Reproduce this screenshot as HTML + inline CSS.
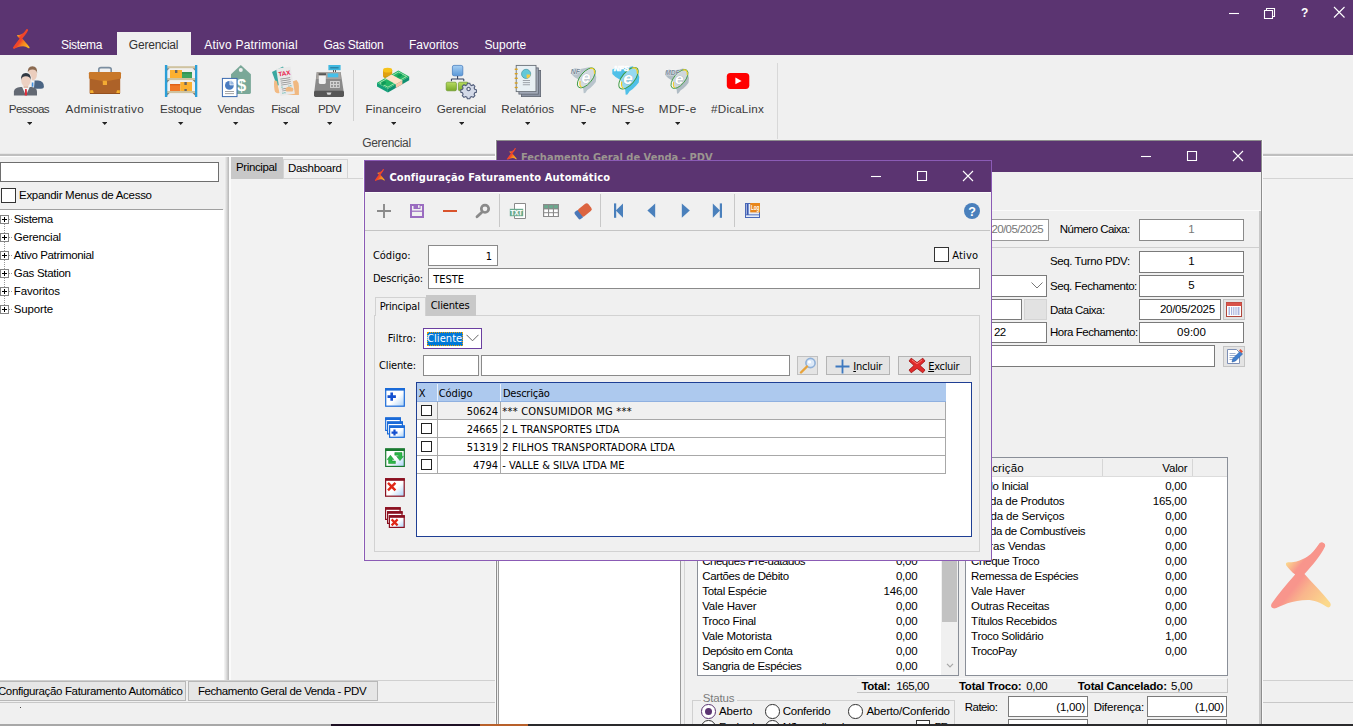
<!DOCTYPE html>
<html><head><meta charset="utf-8"><title>Linx</title>
<style>
html,body{margin:0;padding:0;}
body{width:1353px;height:726px;overflow:hidden;position:relative;background:#f0f0f0;font-family:'Liberation Sans',sans-serif;font-size:11px;}
div,span,svg{position:absolute;box-sizing:border-box;}
.clip{overflow:hidden;}
</style></head><body>
<div style="left:0px;top:0px;width:1353px;height:55px;background:#5b3471;"></div>
<div style="left:0px;top:55px;width:1353px;height:99px;background:#f0f0f0;"></div>
<div style="left:0px;top:153px;width:1353px;height:1px;background:#e6e6e6;"></div>
<div style="left:0px;top:154px;width:1353px;height:2px;background:#bfbfbf;"></div>
<div style="left:117px;top:32px;width:74px;height:24px;background:#f0f0f0;"></div>
<span style="left:61.0px;top:37px;font:normal 12px/16px 'Liberation Sans', sans-serif;color:#fff;letter-spacing:-0.327px;white-space:pre;">Sistema</span>
<span style="left:128.8px;top:37px;font:normal 12px/16px 'Liberation Sans', sans-serif;color:#333;letter-spacing:-0.207px;white-space:pre;">Gerencial</span>
<span style="left:204.2px;top:37px;font:normal 12px/16px 'Liberation Sans', sans-serif;color:#fff;letter-spacing:0.21px;white-space:pre;">Ativo Patrimonial</span>
<span style="left:323.4px;top:37px;font:normal 12px/16px 'Liberation Sans', sans-serif;color:#fff;letter-spacing:-0.25px;white-space:pre;">Gas Station</span>
<span style="left:408.9px;top:37px;font:normal 12px/16px 'Liberation Sans', sans-serif;color:#fff;letter-spacing:0.018px;white-space:pre;">Favoritos</span>
<span style="left:484.4px;top:37px;font:normal 12px/16px 'Liberation Sans', sans-serif;color:#fff;letter-spacing:-0.039px;white-space:pre;">Suporte</span>
<svg style="left:1225px;top:4px;" width="125" height="20" viewBox="0 0 125 20"><g stroke="#fff" stroke-width="1.1" fill="none">
<path d="M4 9.5H14"/>
<path d="M39.5 6.5h8v8h-8z" /><path d="M41.5 6.5v-2h8v8h-2"/>
<path d="M109 3l10.5 10.5M119.5 3L109 13.5"/></g>
<text x="76" y="13" font-family="Liberation Sans, sans-serif" font-weight="bold" font-size="12" fill="#fff">?</text></svg>
<svg style="left:13.1px;top:28.8px;overflow:visible;" width="16.5" height="19.7" viewBox="0.5 0 59.5 66.5" preserveAspectRatio="none"><defs><linearGradient id="lg1" gradientUnits="userSpaceOnUse" x1="15" y1="22" x2="59" y2="57"><stop offset="0" stop-color="#fbb81f"/><stop offset="0.22" stop-color="#f0452a"/><stop offset="0.38" stop-color="#f0452a"/><stop offset="0.58" stop-color="#f6801f"/><stop offset="1" stop-color="#fbb81f"/></linearGradient></defs>
<path d="M49 1.2 C50.5 -0.5 55.5 1 54.6 4.2 C50 14 42 23 34 32 C42 41 52 51 59.5 60.5 C61.5 63.5 59 66.5 56.5 65 C50 60.5 43 58 37 58 C30 58 23 59.5 17 61.3 C12 63 8 65.5 5 66.3 C1.5 67 -0.5 64.5 1.2 61.5 C8 52 16 42 24.7 32.6 C21 29.5 18 26.5 15.8 23.4 C14.8 21.5 16 20.2 18 20.3 C21 20.5 24 20 26 19.5 C30 18.5 34 16.5 37 14.6 C41 12 45 7 49 1.2 Z" fill="url(#lg1)"/><path d="M51.5 3.5 L4.5 63" stroke="#f0452a" stroke-width="5.5" stroke-linecap="round" fill="none" opacity="0.85"/></svg>
<span style="left:8.8px;top:101px;font:normal 11.7px/16px 'Liberation Sans', sans-serif;color:#3a3a3a;letter-spacing:-0.655px;white-space:pre;">Pessoas</span>
<svg style="left:26.6px;top:121.6px;" width="5.4" height="3" viewBox="0 0 5.4 3"><path d="M0 0h5.4l-2.7 3z" fill="#222"/></svg>
<span style="left:65.6px;top:101px;font:normal 11.7px/16px 'Liberation Sans', sans-serif;color:#3a3a3a;letter-spacing:0.361px;white-space:pre;">Administrativo</span>
<svg style="left:102.0px;top:121.6px;" width="5.4" height="3" viewBox="0 0 5.4 3"><path d="M0 0h5.4l-2.7 3z" fill="#222"/></svg>
<span style="left:160.1px;top:101px;font:normal 11.7px/16px 'Liberation Sans', sans-serif;color:#3a3a3a;letter-spacing:-0.215px;white-space:pre;">Estoque</span>
<svg style="left:178.2px;top:121.6px;" width="5.4" height="3" viewBox="0 0 5.4 3"><path d="M0 0h5.4l-2.7 3z" fill="#222"/></svg>
<span style="left:217.6px;top:101px;font:normal 11.7px/16px 'Liberation Sans', sans-serif;color:#3a3a3a;letter-spacing:-0.42px;white-space:pre;">Vendas</span>
<svg style="left:233.4px;top:121.6px;" width="5.4" height="3" viewBox="0 0 5.4 3"><path d="M0 0h5.4l-2.7 3z" fill="#222"/></svg>
<span style="left:271.2px;top:101px;font:normal 11.7px/16px 'Liberation Sans', sans-serif;color:#3a3a3a;letter-spacing:-0.406px;white-space:pre;">Fiscal</span>
<svg style="left:282.8px;top:121.6px;" width="5.4" height="3" viewBox="0 0 5.4 3"><path d="M0 0h5.4l-2.7 3z" fill="#222"/></svg>
<span style="left:318.1px;top:101px;font:normal 11.7px/16px 'Liberation Sans', sans-serif;color:#3a3a3a;letter-spacing:-0.723px;white-space:pre;">PDV</span>
<svg style="left:326.7px;top:121.6px;" width="5.4" height="3" viewBox="0 0 5.4 3"><path d="M0 0h5.4l-2.7 3z" fill="#222"/></svg>
<span style="left:365.6px;top:101px;font:normal 11.7px/16px 'Liberation Sans', sans-serif;color:#3a3a3a;letter-spacing:0.114px;white-space:pre;">Financeiro</span>
<svg style="left:390.7px;top:121.6px;" width="5.4" height="3" viewBox="0 0 5.4 3"><path d="M0 0h5.4l-2.7 3z" fill="#222"/></svg>
<span style="left:436.8px;top:101px;font:normal 11.7px/16px 'Liberation Sans', sans-serif;color:#3a3a3a;letter-spacing:-0.079px;white-space:pre;">Gerencial</span>
<svg style="left:458.8px;top:121.6px;" width="5.4" height="3" viewBox="0 0 5.4 3"><path d="M0 0h5.4l-2.7 3z" fill="#222"/></svg>
<span style="left:501.3px;top:101px;font:normal 11.7px/16px 'Liberation Sans', sans-serif;color:#3a3a3a;letter-spacing:0.008px;white-space:pre;">Relatórios</span>
<svg style="left:524.9px;top:121.6px;" width="5.4" height="3" viewBox="0 0 5.4 3"><path d="M0 0h5.4l-2.7 3z" fill="#222"/></svg>
<span style="left:570.2px;top:101px;font:normal 11.7px/16px 'Liberation Sans', sans-serif;color:#3a3a3a;letter-spacing:0.005px;white-space:pre;">NF-e</span>
<svg style="left:580.5px;top:121.6px;" width="5.4" height="3" viewBox="0 0 5.4 3"><path d="M0 0h5.4l-2.7 3z" fill="#222"/></svg>
<span style="left:611.8px;top:101px;font:normal 11.7px/16px 'Liberation Sans', sans-serif;color:#3a3a3a;letter-spacing:-0.345px;white-space:pre;">NFS-e</span>
<svg style="left:625.3px;top:121.6px;" width="5.4" height="3" viewBox="0 0 5.4 3"><path d="M0 0h5.4l-2.7 3z" fill="#222"/></svg>
<span style="left:658.8px;top:101px;font:normal 11.7px/16px 'Liberation Sans', sans-serif;color:#3a3a3a;letter-spacing:0.42px;white-space:pre;">MDF-e</span>
<svg style="left:674.8px;top:121.6px;" width="5.4" height="3" viewBox="0 0 5.4 3"><path d="M0 0h5.4l-2.7 3z" fill="#222"/></svg>
<span style="left:711.1px;top:101px;font:normal 11.7px/16px 'Liberation Sans', sans-serif;color:#3a3a3a;letter-spacing:0.171px;white-space:pre;">#DicaLinx</span>
<div style="left:353px;top:70px;width:1px;height:51px;background:#d0d0d0;"></div>
<div style="left:777px;top:63px;width:1px;height:76px;background:#d8d8d8;"></div>
<span style="left:362.2px;top:135px;font:normal 12px/16px 'Liberation Sans', sans-serif;color:#444;letter-spacing:-0.307px;white-space:pre;">Gerencial</span>
<svg style="left:0px;top:60px;" width="800" height="40" viewBox="0 60 800 40"><g>
<path d="M31.7 88.7 V82.5 Q32 80.6 35 80.6 H38 Q43.9 81 43.9 86.5 Q43.9 88.7 41 88.7 Z" fill="#4b6584"/>
<path d="M31.7 80.8 L34.6 80.6 L34 88 L31.7 88.5 Z" fill="#f4f6f8"/>
<rect x="31.9" y="82.5" width="1.5" height="4.2" fill="#3f8fe0"/>
<ellipse cx="32.4" cy="74.5" rx="4.6" ry="6" fill="#ebcdbd"/>
<path d="M27.6 73.5 Q27.4 66.4 32.4 66.3 Q37.6 66.4 37.2 73.5 Q36.5 69.6 32.4 69.6 Q28.2 69.6 27.6 73.5Z" fill="#8b6a50"/>
<ellipse cx="25.9" cy="80.2" rx="6" ry="8.4" fill="#f0f0f0"/>
<path d="M13.9 95.5 V91.5 Q14.2 87.6 20.5 86.9 H31.5 Q37 87.6 37 91.5 V95.5 Z" fill="#636973"/>
<path d="M22 86.8 L25.9 95.5 L29.8 86.8 Z" fill="#f6f6f6"/>
<path d="M25.1 89 H26.7 L27.1 95.5 H24.7 Z" fill="#e02a38"/>
<rect x="23.6" y="84" width="4.6" height="4" fill="#e2bfae"/>
<ellipse cx="25.9" cy="80.6" rx="4.7" ry="6" fill="#ecd0c2"/>
<path d="M21 80 Q20.6 73 25.9 72.9 Q31.2 73 30.8 80 Q30.2 76.2 25.9 76.2 Q21.6 76.2 21 80Z" fill="#2f3842"/>
</g><g>
<path d="M98.8 72.5 V69.5 Q98.8 67.6 101 67.6 H109 Q111.2 67.6 111.2 69.5 V72.5" fill="none" stroke="#7b8ea0" stroke-width="1.6"/>
<rect x="89.6" y="76" width="30.6" height="18" rx="1.2" fill="#ad6228"/>
<path d="M88.9 73.2 Q88.9 72 90.1 72 H119.8 Q121 72 121 73.2 V78.6 L105 81.6 L88.9 78.6 Z" fill="#c8782a"/>
<rect x="102.8" y="80.8" width="4.2" height="4.2" rx="0.5" fill="#f3ab32"/>
<path d="M90.2 90.2 H93 L94 94 H90.2 Z" fill="#f5b02e"/><path d="M119.8 90.2 H117 L116 94 H119.8 Z" fill="#f5b02e"/>
<rect x="90" y="93" width="30" height="1" fill="#94501e"/>
</g><g>
<rect x="167" y="66.2" width="28.2" height="2" fill="#cfc3a0"/><rect x="167" y="78" width="28.2" height="2.1" fill="#cfc3a0"/><rect x="167" y="91" width="28.2" height="2.1" fill="#cfc3a0"/>
<rect x="170" y="70" width="12" height="8" fill="#fbb030"/><rect x="175" y="70" width="2.4" height="3" fill="#6a6460"/>
<rect x="182" y="72.2" width="10" height="5.8" fill="#3da560"/><rect x="182" y="72.2" width="10" height="1.3" fill="#2a8a4a"/>
<rect x="170" y="84" width="10.3" height="7" fill="#f07828"/><rect x="170" y="84" width="10.3" height="1.4" fill="#e06018"/>
<rect x="180.3" y="82" width="11.7" height="9" fill="#fbb030"/><rect x="184.4" y="82" width="2.4" height="3" fill="#6a6460"/><rect x="184.4" y="89" width="2.4" height="2" fill="#6a6460"/>
<path d="M167 68.2 h2.6 l-2.6 2.6z M195.2 68.2 h-2.6 l2.6 2.6z M167 80.1 h2.6 l-2.6 2.6z M195.2 80.1 h-2.6 l2.6 2.6z M167 93.1 h2.6 l-2.6 2.6z M195.2 93.1 h-2.6 l2.6 2.6z" fill="#8a8478"/>
<rect x="164.9" y="65" width="2.4" height="32" fill="#2b9fd8"/><rect x="195" y="65" width="2.3" height="32" fill="#2b9fd8"/>
</g><g>
<path d="M240.8 65 L250.9 74.3 V92.6 Q250.9 94 249.5 94 H232.4 Q231 94 231 92.6 V74.3 Z" fill="#7aa898"/>
<circle cx="240.8" cy="70" r="2" fill="#f0f0f0"/>
<text x="241.4" y="91" font-family="Liberation Sans, sans-serif" font-weight="bold" font-size="17" fill="#fff" text-anchor="middle">$</text>
<rect x="222.4" y="78.4" width="14.6" height="18.2" fill="#fff" stroke="#3a6ab0" stroke-width="1"/>
<circle cx="229.4" cy="85.4" r="4.4" fill="#4a7cc0"/><path d="M229.9 84.9 V80.6 A4.4 4.4 0 0 1 234.2 84.9 Z" fill="#9ab8e0" stroke="#fff" stroke-width="0.7"/>
<rect x="225" y="91" width="9" height="0.9" fill="#9a9a9a"/><rect x="225" y="93.2" width="9" height="0.9" fill="#9a9a9a"/>
</g><g>
<path d="M272 72 L283 66.4 L290 80 L277 86 Z" fill="#3aa8a0"/>
<path d="M274.2 80.5 Q276 80 277 81.5 L279.5 93 Q276 94 275 91.5 Q273.6 88 274.2 80.5Z" fill="#f2bb85"/>
<path d="M286 84 L296.5 80 Q299 82.5 298.9 86 V95 H287 Z" fill="#f0b880"/>
<g transform="translate(1.6 0) rotate(-9 284 81)"><rect x="276.6" y="67.4" width="14.6" height="27.6" fill="#e9e9e9"/>
<text x="284" y="75.4" font-family="Liberation Sans, sans-serif" font-weight="bold" font-size="6.4" fill="#e8204a" text-anchor="middle">TAX</text>
<g fill="#8a8a8a"><rect x="279" y="78" width="10" height="0.7"/><rect x="279" y="80" width="10" height="0.7"/><rect x="279" y="82" width="10" height="0.7"/><rect x="279" y="84" width="10" height="0.7"/><rect x="279" y="88" width="6" height="0.7"/><rect x="279" y="90" width="6" height="0.7"/></g>
<g fill="#30a8a0"><rect x="279" y="86" width="1" height="1"/><rect x="286" y="86" width="1" height="1"/><rect x="288" y="86" width="1" height="1"/><rect x="279" y="92" width="1" height="1"/><rect x="281" y="92" width="1" height="1"/></g></g>
<path d="M285.6 88.6 Q287 86.4 289.5 86.8 L293 88 Q294 90 292.6 91.4 L286.5 91.6 Q285 90.4 285.6 88.6Z" fill="#f0b880"/>
</g><g>
<rect x="328.4" y="65" width="12.2" height="5.2" fill="#40b8e0"/><rect x="330.2" y="67.2" width="8.4" height="1.2" fill="#2a7a98"/>
<rect x="333" y="70" width="1" height="2.4" fill="#555"/><rect x="335" y="70" width="1" height="2.4" fill="#555"/>
<path d="M316.7 72 H340.7 L343.6 91 H314.4 Z" fill="#8a8a8a"/>
<path d="M317 72 H340.4 L340.8 79 H316.2 Z" fill="#a8a4a0"/>
<rect x="327.7" y="73.4" width="10.6" height="3.9" fill="#45c0ea"/>
<rect x="318.6" y="73.4" width="7.4" height="1.4" fill="#444"/>
<path d="M318.8 75.8 H325.8 V82.4 Q325.8 84 324 84 H320.6 Q318.8 84 318.8 82.4Z" fill="#f2f2f2"/>
<rect x="330" y="81" width="9.8" height="6.9" fill="#d4d4d4"/>
<g fill="#9a9a9a"><rect x="331" y="82" width="2" height="2"/><rect x="334" y="82" width="2" height="2"/><rect x="337" y="82" width="2" height="2"/><rect x="331" y="85" width="2" height="2"/><rect x="334" y="85" width="2" height="2"/><rect x="337" y="85" width="2" height="2"/></g>
<rect x="314" y="90.7" width="30" height="6.2" rx="1.4" fill="#565656"/>
<path d="M326.5 92.6 h5 l-1 2.2 h-3z" fill="#d8d8d8"/>
</g><g>
<ellipse cx="387.6" cy="76" rx="4.6" ry="2.3" fill="#d89a08"/><rect x="383" y="70.2" width="9.2" height="5.8" fill="#e0a010"/>
<ellipse cx="387.6" cy="70.2" rx="4.6" ry="2.4" fill="#f6c21a"/>
<path d="M377 82.8 L377 86.6 L387.9 92.6 L387.9 88.7 Z" fill="#12a078"/>
<path d="M387.9 88.7 L387.9 92.6 L409.2 80.2 L409.2 76.4 Z" fill="#0f9070"/>
<path d="M377 82.8 L398.4 70.5 L409.2 76.4 L387.9 88.7 Z" fill="#22b465"/>
<path d="M379.6 82.8 L398.4 72 L406.6 76.4 L387.9 87.2 Z" fill="none" stroke="#d8f0c8" stroke-width="0.7"/>
<path d="M385 78.2 L391.5 74.4 L402.4 80.4 L395.8 84.2 Z" fill="#ffe2c8"/>
<path d="M395.8 84.2 L402.4 80.4 V84.2 L395.8 88 Z" fill="#ffc4a8"/>
<ellipse cx="383.6" cy="83.2" rx="2.6" ry="1.6" fill="#0f9a58" transform="rotate(-30 383.6 83.2)"/><ellipse cx="399.6" cy="75.6" rx="2.6" ry="1.6" fill="#0f9a58" transform="rotate(-30 399.6 75.6)"/>
</g><g>
<defs><linearGradient id="gb" x1="0" y1="0" x2="0" y2="1"><stop offset="0" stop-color="#a8d0f4"/><stop offset="1" stop-color="#5a98d8"/></linearGradient>
<linearGradient id="gg" x1="0" y1="0" x2="0" y2="1"><stop offset="0" stop-color="#b8dc60"/><stop offset="1" stop-color="#78a828"/></linearGradient></defs>
<rect x="452.4" y="65.4" width="10.4" height="10.4" rx="1.6" fill="url(#gb)" stroke="#4a80c0" stroke-width="0.8"/>
<path d="M457.6 76 V79 M451.4 81.2 V79 H463.8 V81.2" fill="none" stroke="#2a3a5a" stroke-width="1"/>
<rect x="446.2" y="82.2" width="10.2" height="8.6" rx="1.4" fill="url(#gg)" stroke="#6a9828" stroke-width="0.7"/>
<rect x="458.4" y="82.2" width="10" height="8.6" rx="1.4" fill="url(#gg)" stroke="#6a9828" stroke-width="0.7"/>
<g transform="translate(468.6 89) scale(0.82)"><g fill="#d4dae8" stroke="#4e5a78" stroke-width="1.3">
<path d="M-1.5 -7 h3 l0.6 2 l1.7 0.8 l1.9 -1 l2 2 l-1 1.9 l0.8 1.7 l2 0.6 v3 l-2 0.6 l-0.8 1.7 l1 1.9 l-2 2 l-1.9 -1 l-1.7 0.8 l-0.6 2 h-3 l-0.6 -2 l-1.7 -0.8 l-1.9 1 l-2 -2 l1 -1.9 l-0.8 -1.7 l-2 -0.6 v-3 l2 -0.6 l0.8 -1.7 l-1 -1.9 l2 -2 l1.9 1 l1.7 -0.8z"/>
<circle r="2.1" fill="#f0f0f0"/></g></g>
</g><g>
<rect x="521.4" y="70.4" width="19.2" height="26.2" fill="#8c94a4" stroke="#5e6470" stroke-width="0.8"/>
<rect x="518.9" y="67.9" width="19.4" height="26.2" fill="#a4acba" stroke="#5e6470" stroke-width="0.8"/>
<rect x="516.2" y="65.4" width="19.8" height="26.2" fill="#e8f0f4" stroke="#6a7078" stroke-width="0.9"/>
<g fill="#d8a020"><rect x="514.6" y="68.4" width="3.2" height="1.5" rx="0.7"/><rect x="514.6" y="72.9" width="3.2" height="1.5" rx="0.7"/><rect x="514.6" y="77.6" width="3.2" height="1.5" rx="0.7"/><rect x="514.6" y="82.2" width="3.2" height="1.5" rx="0.7"/><rect x="514.6" y="86.8" width="3.2" height="1.5" rx="0.7"/></g>
<circle cx="526.1" cy="73.9" r="4.6" fill="#62c8d8" stroke="#3a8a98" stroke-width="0.6"/><path d="M526.6 74.4 H530.5 A4.5 4.5 0 0 1 526.6 78.4 Z" fill="#f6c840"/>
<g fill="#8a9098"><rect x="522.8" y="80.2" width="7.2" height="0.8"/><rect x="522.8" y="82.3" width="7.2" height="0.8"/><rect x="522.8" y="84.4" width="7.2" height="0.8"/></g>
</g><g transform="translate(586.3 77.9) scale(1.0)">
<path d="M-15 -8 L-11 -10 L-6 -9 L-1 -10 L4 -11 L8 -7 L10 -1 L9.5 4 L7 7 L4 10 L1 12 L-1 15 L-2.6 15.4 L-3 11 L-6 7 L-7 2 L-12 -1 L-15 -4Z" fill="#b8c4cc"/>
<ellipse cx="0" cy="0" rx="5.8" ry="12.1" transform="rotate(40)" fill="#ffffff" fill-opacity="0.4" stroke="#3c9a40" stroke-width="0.9"/>
<path d="M3.5 -9.4 Q8.6 -10.6 8.2 -4.2" fill="none" stroke="#f4cc20" stroke-width="1.1" />
<path d="M-6.2 3.2 Q-7.2 8.2 -4.6 9.3" fill="none" stroke="#f4cc20" stroke-width="1.1" />
<text x="-0.4" y="5" font-family="Liberation Sans, sans-serif" font-style="italic" font-weight="bold" font-size="16" fill="#fff" text-anchor="middle" stroke="#9aa8b4" stroke-width="0.6" paint-order="stroke">e</text>
<text x="-15.5" y="-3.5" font-family="Liberation Sans, sans-serif" font-style="italic" font-weight="bold" font-size="7" fill="#7a8a9a" stroke="#fff" stroke-width="0.6" paint-order="stroke">NF</text>
</g><g transform="translate(628.5 78.2) scale(1.08)">
<path d="M-15 -8 L-11 -10 L-6 -9 L-1 -10 L4 -11 L8 -7 L10 -1 L9.5 4 L7 7 L4 10 L1 12 L-1 15 L-2.6 15.4 L-3 11 L-6 7 L-7 2 L-12 -1 L-15 -4Z" fill="#50c0e8"/>
<ellipse cx="0" cy="0" rx="5.8" ry="12.1" transform="rotate(40)" fill="#ffffff" fill-opacity="0.4" stroke="#3c9a40" stroke-width="0.9"/>
<path d="M3.5 -9.4 Q8.6 -10.6 8.2 -4.2" fill="none" stroke="#f4cc20" stroke-width="1.1" />
<path d="M-6.2 3.2 Q-7.2 8.2 -4.6 9.3" fill="none" stroke="#f4cc20" stroke-width="1.1" />
<text x="-0.4" y="5" font-family="Liberation Sans, sans-serif" font-style="italic" font-weight="bold" font-size="16" fill="#fff" text-anchor="middle" stroke="#9aa8b4" stroke-width="0.6" paint-order="stroke">e</text>
<text x="-13.5" y="-6.5" font-family="Liberation Sans, sans-serif" font-style="italic" font-weight="bold" font-size="7" fill="#ffffff" stroke="#fff" stroke-width="0.6" paint-order="stroke">NFS</text>
</g><g transform="translate(679.5 79) scale(0.95)">
<path d="M-15 -8 L-11 -10 L-6 -9 L-1 -10 L4 -11 L8 -7 L10 -1 L9.5 4 L7 7 L4 10 L1 12 L-1 15 L-2.6 15.4 L-3 11 L-6 7 L-7 2 L-12 -1 L-15 -4Z" fill="#b0bcc4"/>
<ellipse cx="0" cy="0" rx="5.8" ry="12.1" transform="rotate(40)" fill="#ffffff" fill-opacity="0.4" stroke="#3c9a40" stroke-width="0.9"/>
<path d="M3.5 -9.4 Q8.6 -10.6 8.2 -4.2" fill="none" stroke="#f4cc20" stroke-width="1.1" />
<path d="M-6.2 3.2 Q-7.2 8.2 -4.6 9.3" fill="none" stroke="#f4cc20" stroke-width="1.1" />
<text x="-0.4" y="5" font-family="Liberation Sans, sans-serif" font-style="italic" font-weight="bold" font-size="16" fill="#fff" text-anchor="middle" stroke="#9aa8b4" stroke-width="0.6" paint-order="stroke">e</text>
<text x="-15" y="-4.5" font-family="Liberation Sans, sans-serif" font-style="italic" font-weight="bold" font-size="7" fill="#7a8a9a" stroke="#fff" stroke-width="0.6" paint-order="stroke">MDF</text>
</g><g><rect x="726.8" y="72.9" width="22.5" height="16" rx="3.6" fill="#ff0000"/><path d="M735.4 77.6 L741.6 80.9 L735.4 84.2 Z" fill="#fff"/></g></svg>
<div style="left:0px;top:156px;width:226px;height:524px;background:#f0f0f0;"></div>
<div style="left:0px;top:162px;width:219px;height:20px;background:#fff;border:1px solid #6e6e6e;"></div>
<div style="left:1px;top:188px;width:15px;height:15px;background:#fff;border:1px solid #333;"></div>
<span style="left:19.0px;top:188px;font:normal 11.5px/14px 'Liberation Sans', sans-serif;color:#000;letter-spacing:-0.276px;white-space:pre;">Expandir Menus de Acesso</span>
<div style="left:0px;top:209px;width:223px;height:1px;background:#a0a0a0;"></div>
<div style="left:0px;top:210px;width:224px;height:470px;background:#fff;"></div>
<span style="left:13.8px;top:212px;font:normal 11.5px/14px 'Liberation Sans', sans-serif;color:#000;letter-spacing:-0.374px;white-space:pre;">Sistema</span>
<div style="left:0px;top:215px;width:9px;height:9px;background:#fff;border:1px solid #848484;"></div>
<div style="left:2px;top:219px;width:5px;height:1px;background:#000;"></div>
<div style="left:4px;top:217px;width:1px;height:5px;background:#000;"></div>
<div style="left:9px;top:219px;width:3px;height:1px;border-top:1px dotted #999;"></div>
<div style="left:4px;top:224px;width:1px;height:9px;border-left:1px dotted #999;"></div>
<span style="left:13.8px;top:230px;font:normal 11.5px/14px 'Liberation Sans', sans-serif;color:#000;letter-spacing:-0.24px;white-space:pre;">Gerencial</span>
<div style="left:0px;top:233px;width:9px;height:9px;background:#fff;border:1px solid #848484;"></div>
<div style="left:2px;top:237px;width:5px;height:1px;background:#000;"></div>
<div style="left:4px;top:235px;width:1px;height:5px;background:#000;"></div>
<div style="left:9px;top:237px;width:3px;height:1px;border-top:1px dotted #999;"></div>
<div style="left:4px;top:242px;width:1px;height:9px;border-left:1px dotted #999;"></div>
<span style="left:13.8px;top:248px;font:normal 11.5px/14px 'Liberation Sans', sans-serif;color:#000;letter-spacing:-0.375px;white-space:pre;">Ativo Patrimonial</span>
<div style="left:0px;top:251px;width:9px;height:9px;background:#fff;border:1px solid #848484;"></div>
<div style="left:2px;top:255px;width:5px;height:1px;background:#000;"></div>
<div style="left:4px;top:253px;width:1px;height:5px;background:#000;"></div>
<div style="left:9px;top:255px;width:3px;height:1px;border-top:1px dotted #999;"></div>
<div style="left:4px;top:260px;width:1px;height:9px;border-left:1px dotted #999;"></div>
<span style="left:13.8px;top:266px;font:normal 11.5px/14px 'Liberation Sans', sans-serif;color:#000;letter-spacing:-0.299px;white-space:pre;">Gas Station</span>
<div style="left:0px;top:269px;width:9px;height:9px;background:#fff;border:1px solid #848484;"></div>
<div style="left:2px;top:273px;width:5px;height:1px;background:#000;"></div>
<div style="left:4px;top:271px;width:1px;height:5px;background:#000;"></div>
<div style="left:9px;top:273px;width:3px;height:1px;border-top:1px dotted #999;"></div>
<div style="left:4px;top:278px;width:1px;height:9px;border-left:1px dotted #999;"></div>
<span style="left:13.8px;top:284px;font:normal 11.5px/14px 'Liberation Sans', sans-serif;color:#000;letter-spacing:-0.15px;white-space:pre;">Favoritos</span>
<div style="left:0px;top:287px;width:9px;height:9px;background:#fff;border:1px solid #848484;"></div>
<div style="left:2px;top:291px;width:5px;height:1px;background:#000;"></div>
<div style="left:4px;top:289px;width:1px;height:5px;background:#000;"></div>
<div style="left:9px;top:291px;width:3px;height:1px;border-top:1px dotted #999;"></div>
<div style="left:4px;top:296px;width:1px;height:9px;border-left:1px dotted #999;"></div>
<span style="left:13.8px;top:302px;font:normal 11.5px/14px 'Liberation Sans', sans-serif;color:#000;letter-spacing:-0.164px;white-space:pre;">Suporte</span>
<div style="left:0px;top:305px;width:9px;height:9px;background:#fff;border:1px solid #848484;"></div>
<div style="left:2px;top:309px;width:5px;height:1px;background:#000;"></div>
<div style="left:4px;top:307px;width:1px;height:5px;background:#000;"></div>
<div style="left:9px;top:309px;width:3px;height:1px;border-top:1px dotted #999;"></div>
<div style="left:224px;top:157px;width:5px;height:523px;background:linear-gradient(to right,#f6f6f6,#e2e2e2 40%,#b6b6b6);"></div>
<div style="left:229px;top:157px;width:2px;height:523px;background:#fbfbfb;"></div>
<div style="left:231px;top:157px;width:1122px;height:523px;background:#f2f2f2;"></div>
<div style="left:0px;top:156px;width:1353px;height:1px;background:#fdfdfd;"></div>
<div style="left:231px;top:178px;width:1122px;height:1px;background:#d4d4d4;"></div>
<div style="left:231px;top:157px;width:52px;height:22px;background:#c8c8c8;"></div>
<div style="left:283px;top:159px;width:65px;height:20px;background:#f0f0f0;border:1px solid #d4d4d4;"></div>
<span style="left:236.0px;top:160px;font:normal 11.5px/14px 'Liberation Sans', sans-serif;color:#000;letter-spacing:-0.376px;white-space:pre;">Principal</span>
<span style="left:288.0px;top:161px;font:normal 11.5px/14px 'Liberation Sans', sans-serif;color:#000;letter-spacing:-0.296px;white-space:pre;">Dashboard</span>
<svg style="left:1270.5px;top:542.2px;overflow:visible;" width="59.5" height="66.5" viewBox="0.5 0 59.5 66.5" preserveAspectRatio="none"><defs><linearGradient id="lg2" gradientUnits="userSpaceOnUse" x1="15" y1="22" x2="59" y2="57"><stop offset="0" stop-color="#fbd98c"/><stop offset="0.22" stop-color="#f8958c"/><stop offset="0.38" stop-color="#f8958c"/><stop offset="0.58" stop-color="#f9b58c"/><stop offset="1" stop-color="#fbd98c"/></linearGradient></defs>
<path d="M49 1.2 C50.5 -0.5 55.5 1 54.6 4.2 C50 14 42 23 34 32 C42 41 52 51 59.5 60.5 C61.5 63.5 59 66.5 56.5 65 C50 60.5 43 58 37 58 C30 58 23 59.5 17 61.3 C12 63 8 65.5 5 66.3 C1.5 67 -0.5 64.5 1.2 61.5 C8 52 16 42 24.7 32.6 C21 29.5 18 26.5 15.8 23.4 C14.8 21.5 16 20.2 18 20.3 C21 20.5 24 20 26 19.5 C30 18.5 34 16.5 37 14.6 C41 12 45 7 49 1.2 Z" fill="url(#lg2)"/><path d="M51.5 3.5 L4.5 63" stroke="#f8958c" stroke-width="5.5" stroke-linecap="round" fill="none" opacity="0.85"/></svg>
<div style="left:0px;top:680px;width:1353px;height:46px;background:#f0f0f0;"></div>
<div style="left:0px;top:680px;width:1353px;height:1px;background:#d0d0d0;"></div>
<div style="left:-4px;top:681px;width:190px;height:20px;background:#e6e6e6;border:1px solid #b8b8b8;"></div>
<div style="left:188px;top:681px;width:190px;height:20px;background:#e6e6e6;border:1px solid #b8b8b8;"></div>
<span style="left:-2.1px;top:684px;font:normal 11.5px/14px 'Liberation Sans', sans-serif;color:#000;letter-spacing:-0.353px;white-space:pre;">Configuração Faturamento Automático</span>
<span style="left:197.9px;top:684px;font:normal 11.5px/14px 'Liberation Sans', sans-serif;color:#000;letter-spacing:-0.407px;white-space:pre;">Fechamento Geral de Venda - PDV</span>
<div style="left:0px;top:702px;width:1353px;height:1px;background:#c8c8c8;"></div>
<div style="left:20px;top:707px;width:1px;height:1px;background:#444;"></div>
<div style="left:495px;top:140px;width:768px;height:600px;background:#fafafa;"></div>
<div style="left:496px;top:140px;width:766px;height:600px;background:#f0f0f0;border:1px solid #8e8e8e;"></div>
<div style="left:497px;top:141px;width:764px;height:31px;background:#5b3471;"></div>
<svg style="left:506.8px;top:148px;overflow:visible;" width="9.6" height="11.6" viewBox="0.5 0 59.5 66.5" preserveAspectRatio="none"><defs><linearGradient id="lg3" gradientUnits="userSpaceOnUse" x1="15" y1="22" x2="59" y2="57"><stop offset="0" stop-color="#fbb81f"/><stop offset="0.22" stop-color="#f0452a"/><stop offset="0.38" stop-color="#f0452a"/><stop offset="0.58" stop-color="#f6801f"/><stop offset="1" stop-color="#fbb81f"/></linearGradient></defs>
<path d="M49 1.2 C50.5 -0.5 55.5 1 54.6 4.2 C50 14 42 23 34 32 C42 41 52 51 59.5 60.5 C61.5 63.5 59 66.5 56.5 65 C50 60.5 43 58 37 58 C30 58 23 59.5 17 61.3 C12 63 8 65.5 5 66.3 C1.5 67 -0.5 64.5 1.2 61.5 C8 52 16 42 24.7 32.6 C21 29.5 18 26.5 15.8 23.4 C14.8 21.5 16 20.2 18 20.3 C21 20.5 24 20 26 19.5 C30 18.5 34 16.5 37 14.6 C41 12 45 7 49 1.2 Z" fill="url(#lg3)"/><path d="M51.5 3.5 L4.5 63" stroke="#f0452a" stroke-width="5.5" stroke-linecap="round" fill="none" opacity="0.85"/></svg>
<span style="left:520.9px;top:151px;font:bold 11px/14px 'DejaVu Sans Condensed', 'Liberation Sans', sans-serif;color:#9b9690;letter-spacing:0.029px;white-space:pre;">Fechamento Geral de Venda - PDV</span>
<svg style="left:1136px;top:146px;" width="112" height="20" viewBox="0 0 112 20"><g stroke="#fff" stroke-width="1.1" fill="none"><path d="M5 10.5H15"/><path d="M51.5 5.5h9v9h-9z"/><path d="M97 5l10 10M107 5L97 15"/></g></svg>
<div style="left:497px;top:210px;width:764px;height:1px;background:#fafafa;"></div>
<div style="left:960px;top:219px;width:89px;height:22px;background:#fff;border:1px solid #9a9a9a;"></div>
<span style="left:991.4px;top:222px;font:normal 11.5px/14px 'Liberation Sans', sans-serif;color:#777;letter-spacing:-0.596px;white-space:pre;">20/05/2025</span>
<span style="left:1059.8px;top:222px;font:normal 11.5px/14px 'Liberation Sans', sans-serif;color:#000;letter-spacing:-0.534px;white-space:pre;">Número Caixa:</span>
<div style="left:1139px;top:219px;width:105px;height:22px;background:#fff;border:1px solid #8a8a8a;"></div>
<span style="left:1091.5px;width:200px;text-align:center;top:222px;font:normal 11.5px/14px 'Liberation Sans', sans-serif;color:#777;letter-spacing:0px;white-space:pre;">1</span>
<div style="left:700px;top:247px;width:559px;height:1px;background:#cfcfcf;"></div>
<div style="left:1259px;top:211px;width:2px;height:520px;background:#c8c8c8;"></div>
<span style="left:1050.0px;top:254px;font:normal 11.5px/14px 'Liberation Sans', sans-serif;color:#000;letter-spacing:-0.412px;white-space:pre;">Seq. Turno PDV:</span>
<div style="left:1139px;top:251px;width:105px;height:22px;background:#fff;border:1px solid #7a7a7a;"></div>
<span style="left:1091.5px;width:200px;text-align:center;top:254px;font:normal 11.5px/14px 'Liberation Sans', sans-serif;color:#000;letter-spacing:0px;white-space:pre;">1</span>
<span style="left:1050.0px;top:279px;font:normal 11.5px/14px 'Liberation Sans', sans-serif;color:#000;letter-spacing:-0.446px;white-space:pre;">Seq. Fechamento:</span>
<div style="left:1139px;top:275px;width:105px;height:22px;background:#fff;border:1px solid #7a7a7a;"></div>
<span style="left:1091.5px;width:200px;text-align:center;top:278px;font:normal 11.5px/14px 'Liberation Sans', sans-serif;color:#000;letter-spacing:0px;white-space:pre;">5</span>
<div style="left:900px;top:275px;width:147px;height:22px;background:#fff;border:1px solid #7a7a7a;"></div>
<svg style="left:1031px;top:282px;" width="12" height="7" viewBox="0 0 12 7"><path d="M0.5 0.5l5.5 5.5l5.5-5.5" fill="none" stroke="#777" stroke-width="1"/></svg>
<span style="left:1050.0px;top:303px;font:normal 11.5px/14px 'Liberation Sans', sans-serif;color:#000;letter-spacing:-0.499px;white-space:pre;">Data Caixa:</span>
<div style="left:1139px;top:299px;width:82px;height:21px;background:#fff;border:1px solid #7a7a7a;"></div>
<span style="left:1159.9px;top:302px;font:normal 11.5px/14px 'Liberation Sans', sans-serif;color:#000;letter-spacing:-0.262px;white-space:pre;">20/05/2025</span>
<div style="left:1223px;top:299px;width:22px;height:21px;background:#e4e4e4;border:1px solid #c4c4c4;"></div>
<svg style="left:1226px;top:302px;" width="16" height="15" viewBox="0 0 16 15"><rect x="0.5" y="0.5" width="15" height="14" fill="#fff" stroke="#b0463c"/><rect x="0.5" y="0.5" width="15" height="3.5" fill="#d9534a"/><g fill="#5a6fc0"><rect x="2.5" y="5.5" width="11" height="1"/><rect x="2.5" y="7.5" width="11" height="1"/><rect x="2.5" y="9.5" width="11" height="1"/><rect x="2.5" y="11.5" width="11" height="1"/></g><g fill="#fff"><rect x="4" y="5" width="1" height="8"/><rect x="6.2" y="5" width="1" height="8"/><rect x="8.4" y="5" width="1" height="8"/><rect x="10.6" y="5" width="1" height="8"/></g></svg>
<div style="left:960px;top:299px;width:62px;height:21px;background:#fff;border:1px solid #7a7a7a;"></div>
<div style="left:1024px;top:299px;width:23px;height:21px;background:#e2e2e2;border:1px solid #d4d4d4;"></div>
<span style="left:1050.0px;top:325px;font:normal 11.5px/14px 'Liberation Sans', sans-serif;color:#000;letter-spacing:-0.477px;white-space:pre;">Hora Fechamento:</span>
<div style="left:1139px;top:322px;width:105px;height:21px;background:#fff;border:1px solid #7a7a7a;"></div>
<span style="left:1091.5px;width:200px;text-align:center;top:325px;font:normal 11.5px/14px 'Liberation Sans', sans-serif;color:#000;letter-spacing:0px;white-space:pre;">09:00</span>
<div style="left:960px;top:322px;width:87px;height:21px;background:#fff;border:1px solid #7a7a7a;"></div>
<span style="left:993.9px;top:325px;font:normal 11.5px/14px 'Liberation Sans', sans-serif;color:#000;letter-spacing:-0.597px;white-space:pre;">22</span>
<div style="left:800px;top:345px;width:415px;height:22px;background:#fff;border:1px solid #7a7a7a;"></div>
<div style="left:1223px;top:346px;width:22px;height:21px;background:#e4e4e4;border:1px solid #c4c4c4;"></div>
<svg style="left:1226px;top:348px;" width="17" height="17" viewBox="0 0 17 17"><path d="M1.5 1.5h9l3 3v11h-12z" fill="#fff" stroke="#7d8fb5"/><g stroke="#9fb0d0"><path d="M3.5 5.5h6M3.5 7.5h8M3.5 9.5h5M3.5 11.5h4"/></g><path d="M6 14l1-3.5l7-7l2.5 2.5l-7 7z" fill="#3f7fd0" stroke="#2a5aa0" stroke-width="0.6"/><path d="M13 2.5l1.5-1.5l2.5 2.5l-1.5 1.5z" fill="#e0533a"/></svg>
<div style="left:498px;top:211px;width:183px;height:520px;background:#fff;border:1px solid #9a9a9a;"></div>
<div style="left:684px;top:211px;width:1px;height:520px;background:#d4d4d4;"></div>
<div style="left:697px;top:440px;width:262px;height:236px;background:#fff;border:1px solid #8a8f98;"></div>
<span style="left:702.2px;top:554px;font:normal 11.5px/14px 'Liberation Sans', sans-serif;color:#000;letter-spacing:-0.472px;white-space:pre;">Cheques Pré-datados</span>
<span style="right:435.29999999999995px;top:554px;font:normal 11.5px/14px 'Liberation Sans', sans-serif;color:#000;letter-spacing:-0.2px;margin-right:0.2px;white-space:pre;">0,00</span>
<span style="left:702.2px;top:569px;font:normal 11.5px/14px 'Liberation Sans', sans-serif;color:#000;letter-spacing:-0.363px;white-space:pre;">Cartões de Débito</span>
<span style="right:435.29999999999995px;top:569px;font:normal 11.5px/14px 'Liberation Sans', sans-serif;color:#000;letter-spacing:-0.2px;margin-right:0.2px;white-space:pre;">0,00</span>
<span style="left:702.2px;top:584px;font:normal 11.5px/14px 'Liberation Sans', sans-serif;color:#000;letter-spacing:-0.309px;white-space:pre;">Total Espécie</span>
<span style="right:435.29999999999995px;top:584px;font:normal 11.5px/14px 'Liberation Sans', sans-serif;color:#000;letter-spacing:-0.2px;margin-right:0.2px;white-space:pre;">146,00</span>
<span style="left:702.2px;top:599px;font:normal 11.5px/14px 'Liberation Sans', sans-serif;color:#000;letter-spacing:-0.183px;white-space:pre;">Vale Haver</span>
<span style="right:435.29999999999995px;top:599px;font:normal 11.5px/14px 'Liberation Sans', sans-serif;color:#000;letter-spacing:-0.2px;margin-right:0.2px;white-space:pre;">0,00</span>
<span style="left:702.2px;top:614px;font:normal 11.5px/14px 'Liberation Sans', sans-serif;color:#000;letter-spacing:-0.319px;white-space:pre;">Troco Final</span>
<span style="right:435.29999999999995px;top:614px;font:normal 11.5px/14px 'Liberation Sans', sans-serif;color:#000;letter-spacing:-0.2px;margin-right:0.2px;white-space:pre;">0,00</span>
<span style="left:702.2px;top:629px;font:normal 11.5px/14px 'Liberation Sans', sans-serif;color:#000;letter-spacing:-0.227px;white-space:pre;">Vale Motorista</span>
<span style="right:435.29999999999995px;top:629px;font:normal 11.5px/14px 'Liberation Sans', sans-serif;color:#000;letter-spacing:-0.2px;margin-right:0.2px;white-space:pre;">0,00</span>
<span style="left:702.2px;top:644px;font:normal 11.5px/14px 'Liberation Sans', sans-serif;color:#000;letter-spacing:-0.491px;white-space:pre;">Depósito em Conta</span>
<span style="right:435.29999999999995px;top:644px;font:normal 11.5px/14px 'Liberation Sans', sans-serif;color:#000;letter-spacing:-0.2px;margin-right:0.2px;white-space:pre;">0,00</span>
<span style="left:702.2px;top:659px;font:normal 11.5px/14px 'Liberation Sans', sans-serif;color:#000;letter-spacing:-0.327px;white-space:pre;">Sangria de Espécies</span>
<span style="right:435.29999999999995px;top:659px;font:normal 11.5px/14px 'Liberation Sans', sans-serif;color:#000;letter-spacing:-0.2px;margin-right:0.2px;white-space:pre;">0,00</span>
<div style="left:941px;top:441px;width:17px;height:234px;background:#f0f0f0;"></div>
<div style="left:942px;top:458px;width:15px;height:164px;background:#c2c2c2;"></div>
<svg style="left:946px;top:663px;" width="8" height="5" viewBox="0 0 8 5"><path d="M1 0.8l3 3l3-3" fill="none" stroke="#a6a6a6" stroke-width="1.2"/></svg>
<div style="left:965px;top:457px;width:263px;height:219px;background:#fff;border:1px solid #8a8f98;"></div>
<div style="left:966px;top:458px;width:261px;height:19px;background:#f0f0f0;border-bottom:1px solid #dcdcdc;"></div>
<div style="left:1102px;top:459px;width:1px;height:17px;background:#d6d6d6;"></div>
<div style="left:1192px;top:459px;width:1px;height:17px;background:#d6d6d6;"></div>
<span style="left:971.4px;top:461px;font:normal 11.5px/14px 'Liberation Sans', sans-serif;color:#000;letter-spacing:0.132px;white-space:pre;">Descrição</span>
<span style="right:165.5px;top:461px;font:normal 11.5px/14px 'Liberation Sans', sans-serif;color:#000;letter-spacing:-0.2px;margin-right:0.2px;white-space:pre;">Valor</span>
<span style="left:971.1px;top:479px;font:normal 11.5px/14px 'Liberation Sans', sans-serif;color:#000;letter-spacing:-0.376px;white-space:pre;">Saldo Inicial</span>
<span style="right:166.0999999999999px;top:479px;font:normal 11.5px/14px 'Liberation Sans', sans-serif;color:#000;letter-spacing:-0.2px;margin-right:0.2px;white-space:pre;">0,00</span>
<span style="left:971.1px;top:494px;font:normal 11.5px/14px 'Liberation Sans', sans-serif;color:#000;letter-spacing:-0.271px;white-space:pre;">Venda de Produtos</span>
<span style="right:166.0999999999999px;top:494px;font:normal 11.5px/14px 'Liberation Sans', sans-serif;color:#000;letter-spacing:-0.2px;margin-right:0.2px;white-space:pre;">165,00</span>
<span style="left:971.1px;top:509px;font:normal 11.5px/14px 'Liberation Sans', sans-serif;color:#000;letter-spacing:-0.15px;white-space:pre;">Venda de Serviços</span>
<span style="right:166.0999999999999px;top:509px;font:normal 11.5px/14px 'Liberation Sans', sans-serif;color:#000;letter-spacing:-0.2px;margin-right:0.2px;white-space:pre;">0,00</span>
<span style="left:971.1px;top:524px;font:normal 11.5px/14px 'Liberation Sans', sans-serif;color:#000;letter-spacing:-0.348px;white-space:pre;">Venda de Combustíveis</span>
<span style="right:166.0999999999999px;top:524px;font:normal 11.5px/14px 'Liberation Sans', sans-serif;color:#000;letter-spacing:-0.2px;margin-right:0.2px;white-space:pre;">0,00</span>
<span style="left:971.1px;top:539px;font:normal 11.5px/14px 'Liberation Sans', sans-serif;color:#000;letter-spacing:-0.132px;white-space:pre;">Outras Vendas</span>
<span style="right:166.0999999999999px;top:539px;font:normal 11.5px/14px 'Liberation Sans', sans-serif;color:#000;letter-spacing:-0.2px;margin-right:0.2px;white-space:pre;">0,00</span>
<span style="left:971.1px;top:554px;font:normal 11.5px/14px 'Liberation Sans', sans-serif;color:#000;letter-spacing:-0.341px;white-space:pre;">Cheque Troco</span>
<span style="right:166.0999999999999px;top:554px;font:normal 11.5px/14px 'Liberation Sans', sans-serif;color:#000;letter-spacing:-0.2px;margin-right:0.2px;white-space:pre;">0,00</span>
<span style="left:971.1px;top:569px;font:normal 11.5px/14px 'Liberation Sans', sans-serif;color:#000;letter-spacing:-0.385px;white-space:pre;">Remessa de Espécies</span>
<span style="right:166.0999999999999px;top:569px;font:normal 11.5px/14px 'Liberation Sans', sans-serif;color:#000;letter-spacing:-0.2px;margin-right:0.2px;white-space:pre;">0,00</span>
<span style="left:971.1px;top:584px;font:normal 11.5px/14px 'Liberation Sans', sans-serif;color:#000;letter-spacing:-0.227px;white-space:pre;">Vale Haver</span>
<span style="right:166.0999999999999px;top:584px;font:normal 11.5px/14px 'Liberation Sans', sans-serif;color:#000;letter-spacing:-0.2px;margin-right:0.2px;white-space:pre;">0,00</span>
<span style="left:971.1px;top:599px;font:normal 11.5px/14px 'Liberation Sans', sans-serif;color:#000;letter-spacing:-0.282px;white-space:pre;">Outras Receitas</span>
<span style="right:166.0999999999999px;top:599px;font:normal 11.5px/14px 'Liberation Sans', sans-serif;color:#000;letter-spacing:-0.2px;margin-right:0.2px;white-space:pre;">0,00</span>
<span style="left:971.1px;top:614px;font:normal 11.5px/14px 'Liberation Sans', sans-serif;color:#000;letter-spacing:-0.378px;white-space:pre;">Títulos Recebidos</span>
<span style="right:166.0999999999999px;top:614px;font:normal 11.5px/14px 'Liberation Sans', sans-serif;color:#000;letter-spacing:-0.2px;margin-right:0.2px;white-space:pre;">0,00</span>
<span style="left:971.1px;top:629px;font:normal 11.5px/14px 'Liberation Sans', sans-serif;color:#000;letter-spacing:-0.316px;white-space:pre;">Troco Solidário</span>
<span style="right:166.0999999999999px;top:629px;font:normal 11.5px/14px 'Liberation Sans', sans-serif;color:#000;letter-spacing:-0.2px;margin-right:0.2px;white-space:pre;">1,00</span>
<span style="left:971.1px;top:644px;font:normal 11.5px/14px 'Liberation Sans', sans-serif;color:#000;letter-spacing:-0.4px;white-space:pre;">TrocoPay</span>
<span style="right:166.0999999999999px;top:644px;font:normal 11.5px/14px 'Liberation Sans', sans-serif;color:#000;letter-spacing:-0.2px;margin-right:0.2px;white-space:pre;">0,00</span>
<div style="left:857px;top:678px;width:371px;height:15px;background:#f0f0f0;border-top:1px solid #f8f8f8;border-bottom:1px solid #c4c4c4;border-right:1px solid #c4c4c4;"></div>
<span style="left:861.4px;top:679px;font:bold 11.5px/14px 'Liberation Sans', sans-serif;color:#000;letter-spacing:-0.251px;white-space:pre;">Total:</span>
<span style="left:896.2px;top:679px;font:normal 11.5px/14px 'Liberation Sans', sans-serif;color:#000;letter-spacing:-0.397px;white-space:pre;">165,00</span>
<span style="left:958.9px;top:679px;font:bold 11.5px/14px 'Liberation Sans', sans-serif;color:#000;letter-spacing:-0.205px;white-space:pre;">Total Troco:</span>
<span style="left:1026.3px;top:679px;font:normal 11.5px/14px 'Liberation Sans', sans-serif;color:#000;letter-spacing:-0.364px;white-space:pre;">0,00</span>
<span style="left:1077.8px;top:679px;font:bold 11.5px/14px 'Liberation Sans', sans-serif;color:#000;letter-spacing:-0.174px;white-space:pre;">Total Cancelado:</span>
<span style="left:1171.0px;top:679px;font:normal 11.5px/14px 'Liberation Sans', sans-serif;color:#000;letter-spacing:-0.264px;white-space:pre;">5,00</span>
<div style="left:692px;top:700px;width:263px;height:40px;border:1px solid #d0d0d0;"></div>
<div style="left:701px;top:692px;width:36px;height:12px;background:#f0f0f0;"></div>
<span style="left:702.7px;top:691px;font:normal 11.5px/14px 'Liberation Sans', sans-serif;color:#7a7a7a;letter-spacing:-0.142px;white-space:pre;">Status</span>
<div style="left:701px;top:704.05px;width:14.5px;height:14.5px;background:#fff;border:1.3px solid #5b3471;border-radius:50%;"></div>
<div style="left:704.5px;top:707.55px;width:7.5px;height:7.5px;background:#5b3471;border-radius:50%;"></div>
<span style="left:719.0px;top:704px;font:normal 11.5px/14px 'Liberation Sans', sans-serif;color:#000;letter-spacing:-0.098px;white-space:pre;">Aberto</span>
<div style="left:765px;top:704.05px;width:14.5px;height:14.5px;background:#fff;border:1.2px solid #333;border-radius:50%;"></div>
<span style="left:782.7px;top:704px;font:normal 11.5px/14px 'Liberation Sans', sans-serif;color:#000;letter-spacing:-0.247px;white-space:pre;">Conferido</span>
<div style="left:848px;top:704.05px;width:14.5px;height:14.5px;background:#fff;border:1.2px solid #333;border-radius:50%;"></div>
<span style="left:866.4px;top:704px;font:normal 11.5px/14px 'Liberation Sans', sans-serif;color:#000;letter-spacing:-0.224px;white-space:pre;">Aberto/Conferido</span>
<div style="left:701px;top:720.25px;width:14.5px;height:14.5px;background:#fff;border:1.2px solid #333;border-radius:50%;"></div>
<span style="left:719.0px;top:720px;font:normal 11.5px/14px 'Liberation Sans', sans-serif;color:#000;letter-spacing:-0.528px;white-space:pre;">Fechado</span>
<div style="left:765px;top:720.25px;width:14.5px;height:14.5px;background:#fff;border:1.2px solid #333;border-radius:50%;"></div>
<span style="left:782.7px;top:720px;font:normal 11.5px/14px 'Liberation Sans', sans-serif;color:#000;letter-spacing:-0.256px;white-space:pre;">Não realizado</span>
<div style="left:915.5px;top:720px;width:14.5px;height:14.5px;background:#fff;border:1px solid #333;"></div>
<span style="left:934.4px;top:720px;font:normal 11.5px/14px 'Liberation Sans', sans-serif;color:#000;letter-spacing:-2.144px;white-space:pre;">DF</span>
<span style="left:964.8px;top:700px;font:normal 11.5px/14px 'Liberation Sans', sans-serif;color:#000;letter-spacing:-0.556px;white-space:pre;">Rateio:</span>
<div style="left:1008px;top:696px;width:80px;height:21px;background:#fff;border:1px solid #7a7a7a;"></div>
<span style="right:267.70000000000005px;top:700px;font:normal 11.5px/14px 'Liberation Sans', sans-serif;color:#000;letter-spacing:-0.2px;margin-right:0.2px;white-space:pre;">(1,00)</span>
<span style="left:1093.7px;top:700px;font:normal 11.5px/14px 'Liberation Sans', sans-serif;color:#000;letter-spacing:-0.225px;white-space:pre;">Diferença:</span>
<div style="left:1147px;top:696px;width:80px;height:21px;background:#fff;border:1px solid #7a7a7a;"></div>
<span style="right:128.9000000000001px;top:700px;font:normal 11.5px/14px 'Liberation Sans', sans-serif;color:#000;letter-spacing:-0.2px;margin-right:0.2px;white-space:pre;">(1,00)</span>
<div style="left:1008px;top:719px;width:80px;height:21px;background:#fff;border:1px solid #7a7a7a;"></div>
<div style="left:1147px;top:719px;width:80px;height:21px;background:#fff;border:1px solid #7a7a7a;"></div>
<div style="left:363px;top:160px;width:1px;height:401px;background:#fafafa;"></div>
<div style="left:364px;top:160px;width:628px;height:401px;background:#f0f0f0;border:1px solid #8b5bb5;"></div>
<div style="left:365px;top:161px;width:626px;height:31px;background:#5b3471;"></div>
<div style="left:365px;top:192px;width:626px;height:1px;background:#fcfcfc;"></div>
<svg style="left:374.8px;top:168.8px;overflow:visible;" width="9.7" height="11.9" viewBox="0.5 0 59.5 66.5" preserveAspectRatio="none"><defs><linearGradient id="lg4" gradientUnits="userSpaceOnUse" x1="15" y1="22" x2="59" y2="57"><stop offset="0" stop-color="#fbb81f"/><stop offset="0.22" stop-color="#f0452a"/><stop offset="0.38" stop-color="#f0452a"/><stop offset="0.58" stop-color="#f6801f"/><stop offset="1" stop-color="#fbb81f"/></linearGradient></defs>
<path d="M49 1.2 C50.5 -0.5 55.5 1 54.6 4.2 C50 14 42 23 34 32 C42 41 52 51 59.5 60.5 C61.5 63.5 59 66.5 56.5 65 C50 60.5 43 58 37 58 C30 58 23 59.5 17 61.3 C12 63 8 65.5 5 66.3 C1.5 67 -0.5 64.5 1.2 61.5 C8 52 16 42 24.7 32.6 C21 29.5 18 26.5 15.8 23.4 C14.8 21.5 16 20.2 18 20.3 C21 20.5 24 20 26 19.5 C30 18.5 34 16.5 37 14.6 C41 12 45 7 49 1.2 Z" fill="url(#lg4)"/><path d="M51.5 3.5 L4.5 63" stroke="#f0452a" stroke-width="5.5" stroke-linecap="round" fill="none" opacity="0.85"/></svg>
<span style="left:389.4px;top:171px;font:bold 11px/14px 'DejaVu Sans Condensed', 'Liberation Sans', sans-serif;color:#fff;letter-spacing:0.12px;white-space:pre;">Configuração Faturamento Automático</span>
<svg style="left:866px;top:166px;" width="112" height="20" viewBox="0 0 112 20"><g stroke="#fff" stroke-width="1.1" fill="none"><path d="M5 10.5H15"/><path d="M51.5 5.5h9v9h-9z"/><path d="M97 5l10 10M107 5L97 15"/></g></svg>
<div style="left:365px;top:230px;width:625px;height:1px;background:#c4c4c4;"></div>
<div style="left:499px;top:194px;width:1px;height:33px;background:#c8c8c8;"></div>
<div style="left:600px;top:194px;width:1px;height:33px;background:#c8c8c8;"></div>
<div style="left:734px;top:194px;width:1px;height:33px;background:#c8c8c8;"></div>
<svg style="left:370px;top:195px;" width="620" height="32" viewBox="370 195 620 32"><path d="M377 211H391M384 204V218" stroke="#8a8a8a" stroke-width="1.9" fill="none"/><path d="M411 205H423V217H411Z" fill="none" stroke="#9a6cc0" stroke-width="2"/><rect x="413.5" y="204.5" width="7" height="4.5" fill="#9a6cc0"/><rect x="418" y="205.2" width="1.6" height="2.6" fill="#f0f0f0"/><rect x="412" y="210.6" width="10" height="1.2" fill="#9a6cc0"/><path d="M443 211H457" stroke="#d9532c" stroke-width="2"/><circle cx="485" cy="208.8" r="3.7" fill="none" stroke="#8a8a8a" stroke-width="2.7"/><path d="M481.6 212.4L477 216.8" stroke="#8a8a8a" stroke-width="2.8" stroke-linecap="round"/><path d="M514.5 203.5H525.5V218.5H514.5Z" fill="#fff" stroke="#8a8a8a" stroke-width="1"/><rect x="509.8" y="208.8" width="13.4" height="7.4" fill="#6aaa8e"/><text x="516.5" y="215" font-family="Liberation Sans, sans-serif" font-weight="bold" font-size="7" fill="#fff" stroke="#fff" stroke-width="0.25" text-anchor="middle" textLength="11.8" lengthAdjust="spacingAndGlyphs">TXT</text><rect x="543" y="204" width="16" height="13" fill="#8a8a8a"/><rect x="544.2" y="205.2" width="13.6" height="3" fill="#6aaa8e"/><g fill="#fff"><rect x="544.2" y="209.4" width="3.8" height="2.8"/><rect x="549.1" y="209.4" width="3.8" height="2.8"/><rect x="554" y="209.4" width="3.8" height="2.8"/><rect x="544.2" y="213.2" width="3.8" height="2.8"/><rect x="549.1" y="213.2" width="3.8" height="2.8"/><rect x="554" y="213.2" width="3.8" height="2.8"/></g><rect x="548" y="205.2" width="1.1" height="3" fill="#8a8a8a"/><rect x="552.9" y="205.2" width="1.1" height="3" fill="#8a8a8a"/><g transform="rotate(-38 583.5 211)"><rect x="578.6" y="206.4" width="13" height="9.2" rx="2.4" fill="#dc6440"/><path d="M576.4 206.4h3v9.2h-3q-1.6 0-1.6-1.8v-5.6q0-1.8 1.6-1.8z" fill="#4a78b8"/></g><rect x="614" y="203.4" width="2.2" height="14.4" fill="#4a80bc"/><path d="M623 203.4V217.8L615.8 210.6Z" fill="#4a80bc"/><path d="M655.2 203.4V217.8L647.4 210.6Z" fill="#4a80bc"/><path d="M681.8 203.4V217.8L689.8 210.6Z" fill="#4a80bc"/><path d="M712.8 203.4V217.8L720 210.6Z" fill="#4a80bc"/><rect x="719.8" y="203.4" width="2.2" height="14.4" fill="#4a80bc"/><rect x="745.5" y="203.5" width="14" height="14" fill="#e4ecf8" stroke="#4a68b8" stroke-width="1"/><rect x="746.6" y="204" width="2" height="11" fill="#3a58b0"/><rect x="746" y="214.4" width="13" height="0.9" fill="#4a68b8"/><rect x="750.2" y="203" width="9.8" height="9.4" fill="#e8861a"/><text x="755.1" y="209.8" font-family="Liberation Sans, sans-serif" font-weight="bold" font-size="6.6" fill="#fff" text-anchor="middle" textLength="8.4" lengthAdjust="spacingAndGlyphs">Log</text><circle cx="972" cy="211" r="8" fill="#4a80bc"/><text x="972" y="215.6" font-family="Liberation Sans, sans-serif" font-weight="bold" font-size="12.5" fill="#fff" text-anchor="middle">?</text></svg>
<span style="left:372.9px;top:249px;font:normal 11px/14px 'DejaVu Sans Condensed', 'Liberation Sans', sans-serif;color:#000;letter-spacing:0.002px;white-space:pre;">Código:</span>
<div style="left:428px;top:245px;width:70px;height:21px;background:#fff;border:1px solid #8a8a8a;"></div>
<span style="right:861.0px;top:250px;font:normal 11px/14px 'DejaVu Sans Condensed', 'Liberation Sans', sans-serif;color:#000;letter-spacing:0px;margin-right:0px;white-space:pre;">1</span>
<div style="left:934px;top:247px;width:15px;height:15px;background:#fff;border:1px solid #333;"></div>
<span style="left:952.2px;top:249px;font:normal 11px/14px 'DejaVu Sans Condensed', 'Liberation Sans', sans-serif;color:#000;letter-spacing:0.194px;white-space:pre;">Ativo</span>
<span style="left:372.9px;top:272px;font:normal 11px/14px 'DejaVu Sans Condensed', 'Liberation Sans', sans-serif;color:#000;letter-spacing:-0.192px;white-space:pre;">Descrição:</span>
<div style="left:428px;top:268px;width:552px;height:21px;background:#fff;border:1px solid #8a8a8a;"></div>
<span style="left:433.3px;top:273px;font:normal 11px/14px 'DejaVu Sans Condensed', 'Liberation Sans', sans-serif;color:#000;letter-spacing:-0.069px;white-space:pre;">TESTE</span>
<div style="left:374px;top:315px;width:606px;height:237px;background:#f0f0f0;border:1px solid #d2d2d2;"></div>
<div style="left:375px;top:297px;width:51px;height:19px;background:#f0f0f0;border:1px solid #d2d2d2;border-bottom:none;"></div>
<div style="left:426px;top:295px;width:50px;height:21px;background:#c8c8c8;"></div>
<span style="left:379.7px;top:300px;font:normal 11px/14px 'DejaVu Sans Condensed', 'Liberation Sans', sans-serif;color:#000;letter-spacing:-0.245px;white-space:pre;">Principal</span>
<span style="left:430.8px;top:299px;font:normal 11px/14px 'DejaVu Sans Condensed', 'Liberation Sans', sans-serif;color:#000;letter-spacing:-0.158px;white-space:pre;">Clientes</span>
<span style="left:387.8px;top:332px;font:normal 11px/14px 'DejaVu Sans Condensed', 'Liberation Sans', sans-serif;color:#000;letter-spacing:0.136px;white-space:pre;">Filtro:</span>
<div style="left:423px;top:328px;width:59px;height:21px;background:#fff;border:1px solid #6b3fa0;"></div>
<div style="left:426.5px;top:331.5px;width:36.5px;height:14px;background:#0078d7;outline:1px dotted #f0a000;outline-offset:-1px;"></div>
<span style="left:427.0px;top:332px;font:normal 11px/14px 'DejaVu Sans Condensed', 'Liberation Sans', sans-serif;color:#fff;letter-spacing:0.075px;white-space:pre;">Cliente</span>
<svg style="left:466px;top:334px;" width="13" height="8" viewBox="0 0 13 8"><path d="M0.5 0.8l6 6l6-6" fill="none" stroke="#666" stroke-width="1"/></svg>
<span style="left:379.0px;top:359px;font:normal 11px/14px 'DejaVu Sans Condensed', 'Liberation Sans', sans-serif;color:#000;letter-spacing:-0.142px;white-space:pre;">Cliente:</span>
<div style="left:423px;top:355px;width:56px;height:21px;background:#fff;border:1px solid #8a8a8a;"></div>
<div style="left:481px;top:355px;width:309px;height:21px;background:#fff;border:1px solid #8a8a8a;"></div>
<div style="left:797px;top:356px;width:21px;height:19px;background:#e4e4e4;border:1px solid #c0c0c0;"></div>
<div style="left:826px;top:356px;width:64px;height:19px;background:#e4e4e4;border:1px solid #b4b4b4;"></div>
<div style="left:898px;top:356px;width:73px;height:19px;background:#e4e4e4;border:1px solid #b4b4b4;"></div>
<span style="left:853.3px;top:360px;font:normal 11px/14px 'DejaVu Sans Condensed', 'Liberation Sans', sans-serif;color:#000;letter-spacing:-0.247px;white-space:pre;"><u>I</u>ncluir</span>
<span style="left:928.2px;top:360px;font:normal 11px/14px 'DejaVu Sans Condensed', 'Liberation Sans', sans-serif;color:#000;letter-spacing:-0.303px;white-space:pre;"><u>E</u>xcluir</span>
<svg style="left:835px;top:358.5px;" width="15" height="15" viewBox="0 0 15 15"><path d="M7.5 0.5v14M0.5 7.5h14" stroke="#3d78bf" stroke-width="1.8" fill="none"/></svg>
<svg style="left:908px;top:357px;" width="18" height="17" viewBox="0 0 18 17"><path d="M3.2 1.2 L9 5.6 L14.8 1.2 L17 4 L12 8.5 L17 13 L14.8 15.8 L9 11.4 L3.2 15.8 L1 13 L6 8.5 L1 4 Z" fill="#e02b2b" stroke="#a01010" stroke-width="0.8" stroke-linejoin="round"/><path d="M4 3 L9 6.8 L14 3" fill="none" stroke="#ff8a80" stroke-width="1" opacity="0.8"/></svg>
<svg style="left:799px;top:357px;" width="18" height="17" viewBox="0 0 18 17"><circle cx="11.5" cy="6" r="4.6" fill="#dce9f8" stroke="#8fb0d8" stroke-width="1.6"/><circle cx="10.5" cy="5" r="1.6" fill="#fff"/><path d="M8 9.5l-6 6" stroke="#e8a33a" stroke-width="2.4" stroke-linecap="round"/></svg>
<div style="left:416px;top:382px;width:556px;height:155px;background:#fff;border:1px solid #1f3f94;"></div>
<div style="left:417px;top:383px;width:529px;height:19px;background:#adc9ee;border-bottom:1px solid #8fb0e0;"></div>
<div style="left:436.5px;top:384px;width:1px;height:17px;background:#e8f0fb;"></div>
<div style="left:500px;top:384px;width:1px;height:17px;background:#e8f0fb;"></div>
<div style="left:417px;top:402px;width:529px;height:17px;background:#f0f0f0;"></div>
<div style="left:417px;top:419px;width:529px;height:1px;background:#a8a8a8;"></div>
<div style="left:421px;top:405.0px;width:11px;height:11px;background:#fff;border:1px solid #222;"></div>
<div style="left:417px;top:437px;width:529px;height:1px;background:#a8a8a8;"></div>
<div style="left:421px;top:423.0px;width:11px;height:11px;background:#fff;border:1px solid #222;"></div>
<div style="left:417px;top:455px;width:529px;height:1px;background:#a8a8a8;"></div>
<div style="left:421px;top:441.0px;width:11px;height:11px;background:#fff;border:1px solid #222;"></div>
<div style="left:417px;top:473px;width:529px;height:1px;background:#a8a8a8;"></div>
<div style="left:421px;top:459.0px;width:11px;height:11px;background:#fff;border:1px solid #222;"></div>
<div style="left:436.5px;top:402px;width:1px;height:71px;background:#a8a8a8;"></div>
<div style="left:500px;top:402px;width:1px;height:71px;background:#a8a8a8;"></div>
<div style="left:945px;top:402px;width:1px;height:72px;background:#a8a8a8;"></div>
<span style="left:418.8px;top:387px;font:normal 11px/14px 'DejaVu Sans Condensed', 'Liberation Sans', sans-serif;color:#000;letter-spacing:0.319px;white-space:pre;">X</span>
<span style="left:438.8px;top:387px;font:normal 11px/14px 'DejaVu Sans Condensed', 'Liberation Sans', sans-serif;color:#000;letter-spacing:-0.109px;white-space:pre;">Código</span>
<span style="left:502.9px;top:387px;font:normal 11px/14px 'DejaVu Sans Condensed', 'Liberation Sans', sans-serif;color:#000;letter-spacing:-0.211px;white-space:pre;">Descrição</span>
<span style="right:855.0px;top:405px;font:normal 11px/14px 'DejaVu Sans Condensed', 'Liberation Sans', sans-serif;color:#000;letter-spacing:-0.05px;margin-right:0.05px;white-space:pre;">50624</span>
<span style="left:502.3px;top:405px;font:normal 11px/14px 'DejaVu Sans Condensed', 'Liberation Sans', sans-serif;color:#000;letter-spacing:0.23px;white-space:pre;">*** CONSUMIDOR MG ***</span>
<span style="right:855.0px;top:423px;font:normal 11px/14px 'DejaVu Sans Condensed', 'Liberation Sans', sans-serif;color:#000;letter-spacing:-0.05px;margin-right:0.05px;white-space:pre;">24665</span>
<span style="left:502.3px;top:423px;font:normal 11px/14px 'DejaVu Sans Condensed', 'Liberation Sans', sans-serif;color:#000;letter-spacing:0.026px;white-space:pre;">2 L TRANSPORTES LTDA</span>
<span style="right:855.0px;top:441px;font:normal 11px/14px 'DejaVu Sans Condensed', 'Liberation Sans', sans-serif;color:#000;letter-spacing:-0.05px;margin-right:0.05px;white-space:pre;">51319</span>
<span style="left:502.3px;top:441px;font:normal 11px/14px 'DejaVu Sans Condensed', 'Liberation Sans', sans-serif;color:#000;letter-spacing:0.129px;white-space:pre;">2 FILHOS TRANSPORTADORA LTDA</span>
<span style="right:855.0px;top:459px;font:normal 11px/14px 'DejaVu Sans Condensed', 'Liberation Sans', sans-serif;color:#000;letter-spacing:-0.05px;margin-right:0.05px;white-space:pre;">4794</span>
<span style="left:502.3px;top:459px;font:normal 11px/14px 'DejaVu Sans Condensed', 'Liberation Sans', sans-serif;color:#000;letter-spacing:-0.008px;white-space:pre;">- VALLE &amp; SILVA LTDA ME</span>
<svg style="left:380px;top:385px;" width="30" height="146" viewBox="380 385 30 146"><defs><linearGradient id="wf" x1="0" y1="0" x2="1" y2="1"><stop offset="0" stop-color="#ffffff"/><stop offset="0.55" stop-color="#ffffff"/><stop offset="1" stop-color="#a8d0f8"/></linearGradient></defs><rect x="385.70000000000005" y="388.6" width="18.599999999999955" height="17.600000000000012" fill="url(#wf)" stroke="#1a6ad8" stroke-width="1.2"/><rect x="385.1" y="388" width="19.799999999999955" height="2.6" fill="#1a6ad8"/><path d="M387.5 396.6H395.9M391.7 392.40000000000003V400.8" stroke="#1450d0" stroke-width="2.6" fill="none"/><rect x="385.70000000000005" y="418.0" width="14.699999999999978" height="12.400000000000023" fill="url(#wf)" stroke="#1a6ad8" stroke-width="1.2"/><rect x="385.1" y="417.4" width="15.899999999999977" height="2.6" fill="#1a6ad8"/><rect x="387.6" y="422.0" width="14.8" height="11.900000000000023" fill="url(#wf)" stroke="#1a6ad8" stroke-width="1.2"/><rect x="387" y="421.4" width="16" height="2.6" fill="#1a6ad8"/><rect x="389.6" y="426.0" width="14.699999999999978" height="11.3" fill="url(#wf)" stroke="#1a6ad8" stroke-width="1.2"/><rect x="389" y="425.4" width="15.899999999999977" height="2.6" fill="#1a6ad8"/><path d="M391.5 432.6H397.5M394.5 429.6V435.6" stroke="#1450d0" stroke-width="2.2" fill="none"/><rect x="385.70000000000005" y="449.0" width="18.599999999999955" height="17.400000000000023" fill="url(#wf)" stroke="#1a7a30" stroke-width="1.2"/><rect x="385.1" y="448.4" width="19.799999999999955" height="2.6" fill="#1a7a30"/><path d="M394.8 452.6 H402 V456.4 H403.4 L400 460.6 L396.6 456.4 H398.6 V455.2 H394.8Z" fill="#2cb848" stroke="#158a2c" stroke-width="0.5"/><path d="M395.4 463.6 H388.6 V459.6 H387.2 L390.4 455.2 L393.8 459.6 H392 V461 H395.4Z" fill="#2cb848" stroke="#158a2c" stroke-width="0.5"/><rect x="385.6" y="478.8" width="18.600000000000012" height="17.400000000000023" fill="url(#wf)" stroke="#8a1020" stroke-width="1.2"/><rect x="385" y="478.2" width="19.80000000000001" height="2.6" fill="#8a1020"/><path d="M388.0 482.90000000000003L395.4 490.3M395.4 482.90000000000003L388.0 490.3" stroke="#e02818" stroke-width="2.4" fill="none"/><rect x="385.6" y="507.8" width="14.49999999999999" height="11.600000000000012" fill="url(#wf)" stroke="#8a1020" stroke-width="1.2"/><rect x="385" y="507.2" width="15.699999999999989" height="2.6" fill="#8a1020"/><rect x="387.6" y="511.8" width="14.400000000000023" height="11.600000000000012" fill="url(#wf)" stroke="#8a1020" stroke-width="1.2"/><rect x="387" y="511.2" width="15.600000000000023" height="2.6" fill="#8a1020"/><rect x="389.40000000000003" y="515.8000000000001" width="14.8" height="11.599999999999955" fill="url(#wf)" stroke="#8a1020" stroke-width="1.2"/><rect x="388.8" y="515.2" width="16.0" height="2.6" fill="#8a1020"/><path d="M391.6 519.4L397.6 525.4M397.6 519.4L391.6 525.4" stroke="#e02818" stroke-width="2.2" fill="none"/></svg>
<div style="left:0px;top:724px;width:1353px;height:2px;background:#a8a8a8;"></div>
<div style="left:331px;top:724px;width:1022px;height:2px;background:#2a2a2c;"></div>
<div style="left:331px;top:724px;width:149px;height:2px;background:#1e1024;"></div>
<div style="left:480px;top:724px;width:48px;height:2px;background:#b8602a;"></div>
</body></html>
